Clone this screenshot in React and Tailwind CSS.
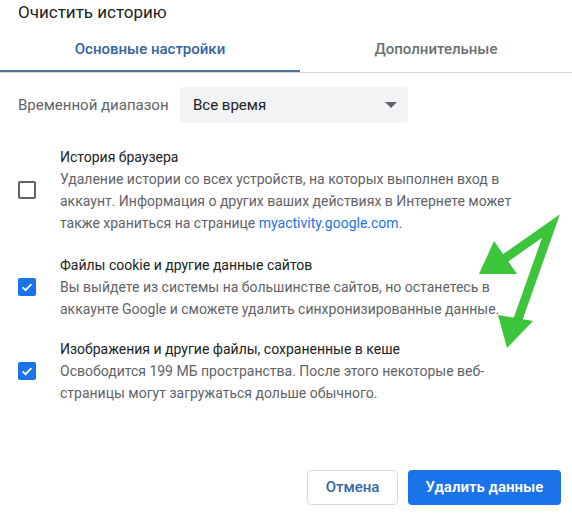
import { useState } from "react";

function Checkbox({ checked, onChange }) {
  return (
    <button
      type="button"
      onClick={onChange}
      className={
        "w-[18px] h-[18px] shrink-0 rounded-[2px] flex items-center justify-center " +
        (checked ? "bg-[#1a73e8]" : "border-2 border-[#5f6368] bg-white")
      }
    >
      {checked && (
        <svg width="14" height="14" viewBox="0 0 24 24" fill="none">
          <path d="M4.5 12.5l5 5L19.5 7" stroke="white" strokeWidth="3" />
        </svg>
      )}
    </button>
  );
}

function Item({ title, checked, onToggle, children, className }) {
  return (
    <div className={"flex items-center gap-[24px] pl-[18px] pr-[40px] " + className}>
      <Checkbox checked={checked} onChange={onToggle} />
      <div className="text-[14px] leading-[22px]">
        <div className="text-[#202124]">{title}</div>
        <div className="text-[#5f6368]">{children}</div>
      </div>
    </div>
  );
}

export default function App() {
  const [tab, setTab] = useState(0);
  const [history, setHistory] = useState(false);
  const [cookies, setCookies] = useState(true);
  const [cache, setCache] = useState(true);

  return (
    <div className="relative w-[572px] h-[524px] bg-white overflow-hidden font-['Roboto',sans-serif]">
      <div className="h-[28px] px-[18px] pt-[1px] text-[17px] leading-[22px] text-[#202124]">Очистить историю</div>

      <div className="flex h-[45px] border-b border-[#dadce0]">
        <button
          onClick={() => setTab(0)}
          className={
            "w-[300px] text-[15px] font-medium border-b-2 " +
            (tab === 0 ? "text-[#33649f] border-[#4a7298]" : "text-[#6b6f73] border-transparent")
          }
        >
          Основные настройки
        </button>
        <button
          onClick={() => setTab(1)}
          className={
            "flex-1 text-[15px] font-medium border-b-2 " +
            (tab === 1 ? "text-[#33649f] border-[#4a7298]" : "text-[#6b6f73] border-transparent")
          }
        >
          Дополнительные
        </button>
      </div>

      <div className="flex items-center mt-[14px] pl-[18px] gap-[12px]">
        <span className="w-[150px] whitespace-nowrap text-[15px] text-[#5f6368]">Временной диапазон</span>
        <div className="w-[228px] h-[36px] bg-[#f1f3f4] rounded-[4px] flex items-center justify-between pl-[13px] pr-[11px]">
          <span className="text-[15px] text-[#202124]">Все время</span>
          <svg width="12" height="6" viewBox="0 0 12 6">
            <path d="M0 0h12L6 6z" fill="#5f6368" />
          </svg>
        </div>
      </div>

      <Item className="mt-[23px]" title="История браузера" checked={history} onToggle={() => setHistory(!history)}>
        Удаление истории со всех устройств, на которых выполнен вход в аккаунт. Информация о других ваших действиях в Интернете может
        также храниться на странице <a className="text-[#1a73e8]">myactivity.google.com</a>.
      </Item>

      <Item className="mt-[20px]" title="Файлы cookie и другие данные сайтов" checked={cookies} onToggle={() => setCookies(!cookies)}>
        Вы выйдете из системы на большинстве сайтов, но останетесь в аккаунте Google и сможете удалить синхронизированные данные.
      </Item>

      <Item className="mt-[18px]" title="Изображения и другие файлы, сохраненные в кеше" checked={cache} onToggle={() => setCache(!cache)}>
        Освободится 199 МБ пространства. После этого некоторые веб-страницы могут загружаться дольше обычного.
      </Item>

      <div className="absolute left-0 right-0 bottom-[19px] flex justify-end gap-[10px] pr-[11px]">
        <button className="w-[91px] h-[35px] rounded-[4px] border border-[#dadce0] text-[15px] font-medium text-[#3367a8]">Отмена</button>
        <button className="w-[153px] h-[35px] rounded-[4px] bg-[#1a73e8] text-[15px] font-semibold text-white">Удалить данные</button>
      </div>

      <svg className="absolute inset-0 pointer-events-none" width="572" height="524">
        <polyline points="504,259 551,226 517,322" fill="none" stroke="#3cc43c" strokeWidth="9" strokeLinejoin="miter" />
        <polygon points="494,241 479,274 517,274" fill="#3cc43c" />
        <polygon points="498,315 533,321 507,348" fill="#3cc43c" />
      </svg>
    </div>
  );
}
